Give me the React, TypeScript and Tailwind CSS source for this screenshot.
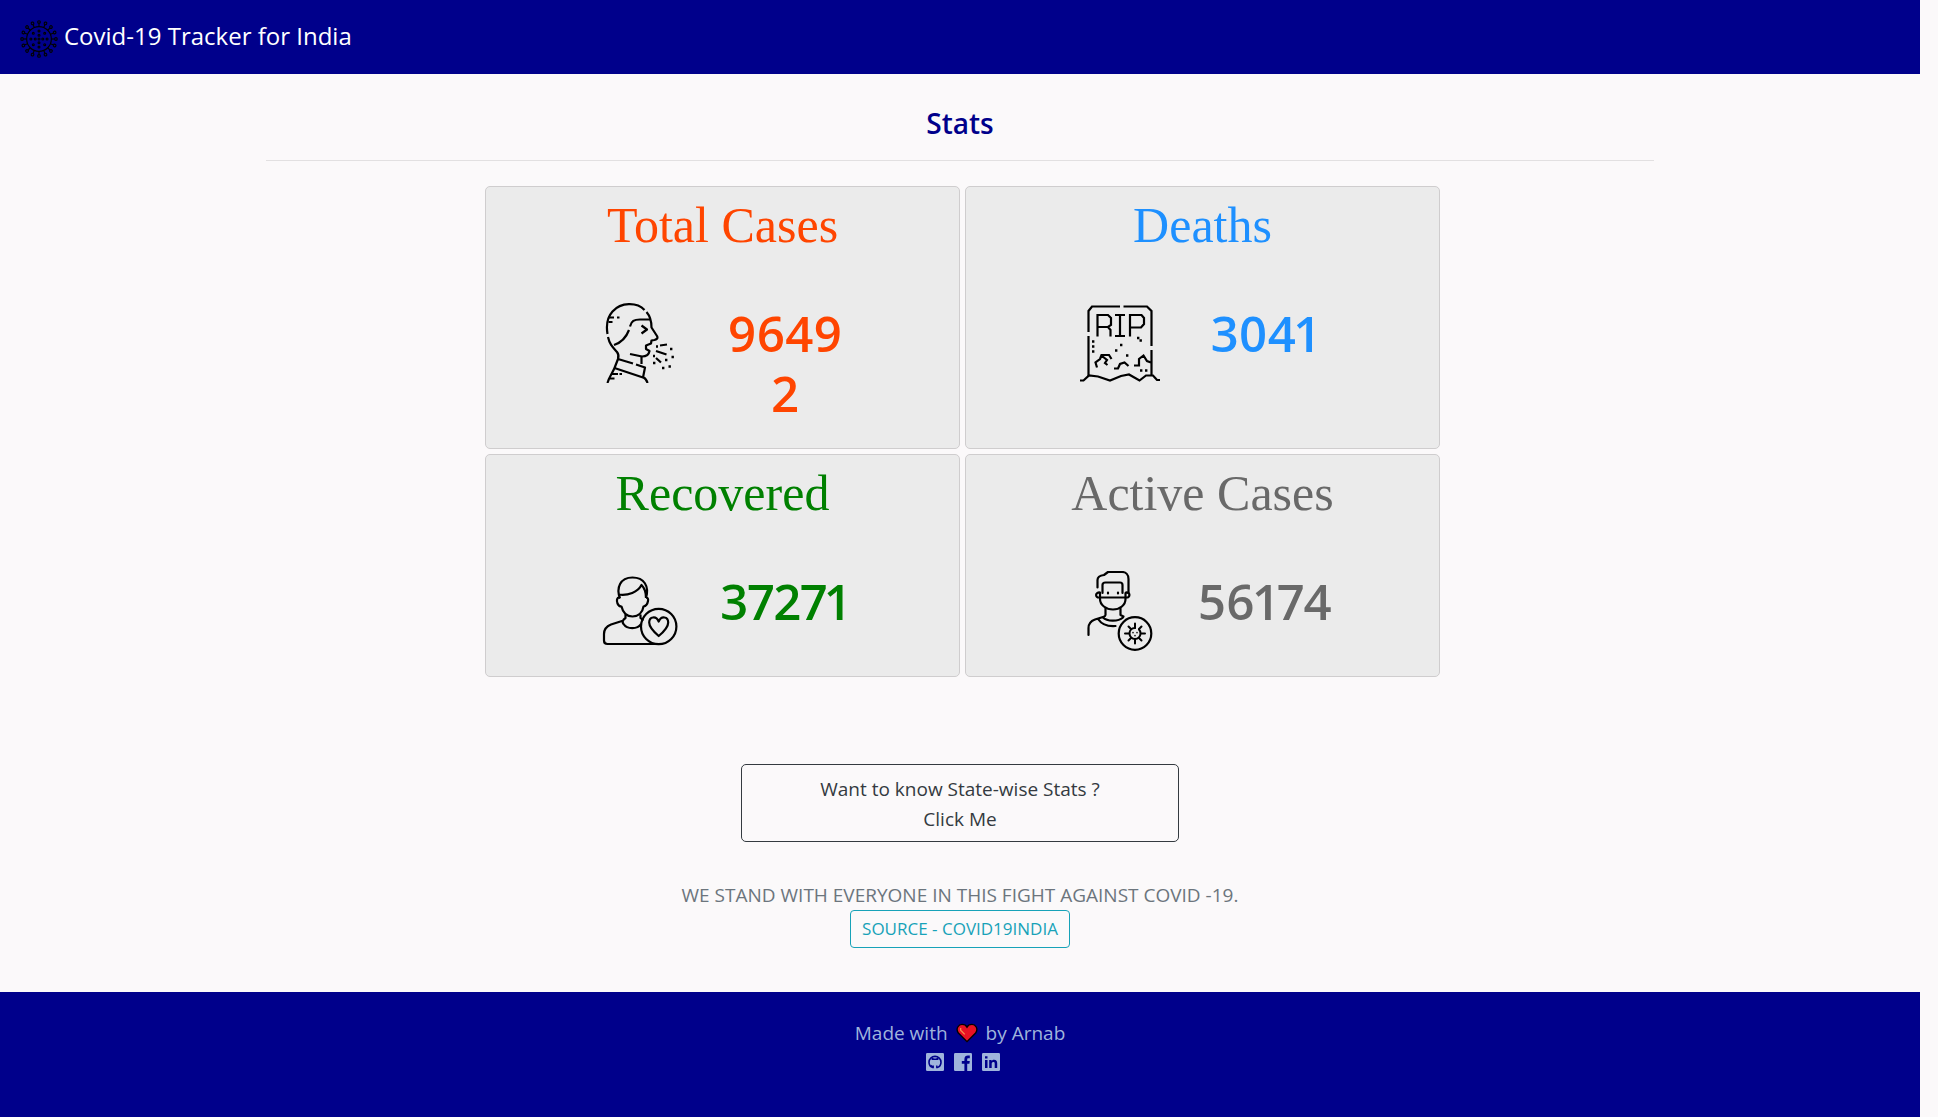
import React from "react";

function VirusLogo() {
  const spikes = Array.from({ length: 16 }, (_, i) => i * 22.5);
  const dots = [
    [20, 20], [20, 16], [20, 24], [24, 20], [16, 20], [20, 11.5], [20, 28.5], [11.5, 20], [28.5, 20],
    [14, 14], [26, 26], [14, 26], [26, 14],
  ];
  return (
    <svg viewBox="0 0 40 40" className="size-[38px]" fill="none" stroke="#000" strokeWidth="1.2" aria-hidden="true">
      <circle cx="20" cy="20" r="13" />
      {spikes.map((a) => (
        <g key={a} transform={`rotate(${a} 20 20)`}>
          <path d="M20 7V4" />
          <circle cx="20" cy="2.2" r="1.4" />
        </g>
      ))}
      {dots.map(([x, y]) => (
        <circle key={`${x}-${y}`} cx={x} cy={y} r="1" />
      ))}
    </svg>
  );
}

function CoughIcon() {
  return (
    <svg viewBox="0 0 80 80" className="size-20 shrink-0" fill="none" stroke="#000" strokeWidth="2.2" strokeLinejoin="round" aria-hidden="true">
      <path d="M7.5 31C6 22 7.500 14 12.500 8.500C21-1 37-1 44.500 7M46.500 9C50 13 51.500 18 51.500 24.500L57 33C58 35 57.500 36 54.500 37L51.500 37.500L51 40.500L46 42.500L46 46L49.500 48C49 51 47.500 53.500 42 53.500L30 51" />
      <path d="M51 16.500H40C34 16.500 31.500 18 30 23.500M29 27C26 35 20 40 14 42" />
      <path d="M8 34C9.500 41 12.500 44 17 49C19 51.500 19 53 18 56M41.500 53.500V61" />
      <path d="M33 60.500L18 56L14.500 65L43 74.500L45 64.500L36 61.500M14.500 65C12 71 9 74 7.500 80M43 74C45.500 75.500 47 77.500 47.500 80" />
      <path d="M41.500 22.500L47 26.500L41.500 30.500M8 14.500H14M8.500 19H12.500M17 14.500H19.500M12 71H18M10 75.500H14.500M19.500 71H22M60 42.500L67 41.500M56 48L66.500 51.500M56 55L61 59.500" />
      <path d="M56 43.500h2M70 46h2.400M71.500 54h2.400M65 57h2.400M53 60h2.400M68.500 63.500h2.400M62 65h2.400M53 53h2" strokeWidth="2.400" />
    </svg>
  );
}

function GraveIcon() {
  return (
    <svg viewBox="0 0 80 80" className="size-20 shrink-0" fill="none" stroke="#000" strokeWidth="2.2" aria-hidden="true">
      <path d="M8.500 29V8L12 3.500H40M43.500 3.500H67L71.500 8V43M8.500 33V73M71.500 47V73" />
      <path d="M0 77.500H3.500L9 72.500L18 73.500L30 77.500L41 73L49 71.500L59.500 77.500L66 72.500H73L77 77H80" />
      <path d="M17.500 33.500V12H28L31 15V22L28 24H17.500M28 24L30.500 27V33.500M35 12H45M40 12V33M35 33H45M50 33.500V12H61.500L64 15V21L61 24.500H50" />
      <path d="M17 64.500L15.500 59.500L20 56L21.500 52H29L31.500 56M22 53L27 57L25 60L27.500 62M34 65.500H38L40 61L44.500 59.500L48.500 63M54 62.500H59V56L63.500 52.500L67 58L71 59.500" />
      <path d="M12 38.500h2.400M12 43.500h2.400M12 48.500h2.400M57 35h2.400M59.500 37.500h2.400M40 42h2.400M35 47.500h2.400M46 52.500h2.400M60 67.500h2.400M65 67.500h2.400" strokeWidth="2.400" />
    </svg>
  );
}

function RecoveredIcon() {
  return (
    <svg viewBox="0 0 80 80" className="size-20 shrink-0" fill="none" stroke="#000" strokeWidth="2.2" strokeLinejoin="round" aria-hidden="true">
      <path d="M20 27.500C16 17 20 6.500 32.500 6.500C44 6.500 49.500 15 46 27M18.500 23.500C28 25 38 21 41.500 14C44 16.500 46 20 46 27" />
      <path d="M20 26.500C16.500 26 16.500 30 17.500 32.500C18.500 35 20 35.500 21.500 35.500C23 42 27 45.500 32.500 45.500C38 45.500 42.500 42 43.500 35.500C46 35 47.500 33 48 30C48.500 27.500 47.500 26.500 46 27" />
      <path d="M25.500 43.500V47C22.500 49 22 51 23.500 53C27 58.500 37.500 58.500 41 53M40.500 43.500V47L43.500 49.500M23.500 49.500L11 53.500C6 55.500 4 59 4 63V69.500C4 71.500 5.500 73 7.500 73H60" />
      <circle cx="58.700" cy="55.500" r="17.700" />
      <path d="M58.700 65C54 61 49.200 56.500 49.200 51.500C49.200 45.500 56.200 44.500 58.700 50.500C61.200 44.500 68.200 45.500 68.200 51.500C68.200 56.500 63.500 61 58.700 65Z" />
    </svg>
  );
}

function ActiveIcon() {
  return (
    <svg viewBox="0 0 80 80" className="size-20 shrink-0" fill="none" stroke="#000" strokeWidth="2.2" strokeLinecap="round" strokeLinejoin="round" aria-hidden="true">
      <path d="M17.500 16.500V9C17.500 5.500 20 4.500 24 4L28 1H42C46 1 48.500 4 48.500 8V22M22.500 22V14C22.500 12.500 24 11.500 25.500 11.500H40C41.500 11.500 42.500 12.500 42.500 14V22" />
      <path d="M20 26.500H46M20 21.500C15 21 15 26.500 19 26.500M46 21.500C50.500 21 50.500 26.500 46.500 26.500M20 22V28C20 34 26 38.500 33 38.500C40 38.500 45.500 34 45.500 28V22M28 21.500V22.500M38 21.500V22.500" />
      <path d="M25.500 37.500V44C25.500 45 24.500 45.500 23 46L15 48.500C11 50 8.500 52 8.500 57V64M40.500 37.500V44L43.500 45.500M23 46.500C27 50.500 38 51 43 46.500M18.500 48.500C22 54 28 55.500 35.500 55" />
      <circle cx="55" cy="62.500" r="16.300" />
      <path d="M55 57V52.500M55 68.500v4M49 62.500H45M61 62.500H65M51 58L48.500 55.500M59 58L61.500 55.500M51 67L48.500 69.500M59 67L61.500 69.500" strokeWidth="2" />
      <path d="M55 57C51.500 57 49.500 59.500 49.500 62.500C49.500 65.500 52 68 55 68C58 68 60.500 65.500 60.500 62.500C60.500 61 60 59.500 59 58.500" strokeWidth="2" />
      <path d="M53 61.500v.2M57 61.500v.2M55 64.500v.2" strokeWidth="1.500" />
    </svg>
  );
}

function HeartIcon() {
  return (
    <svg viewBox="0 0 24 22" className="h-5 w-[22px]" role="img" aria-label="love">
      <path d="M12 20.500L2.500 11C-1 6 3 1.500 6.500 1.500C9 1.500 11 2.500 12 4.500C13 2.500 15 1.500 17.500 1.500C21 1.500 25 6 21.500 11Z" fill="#e81224" stroke="#000" strokeWidth="1.500" />
      <path d="M5 5.500V8L9.500 12.500" fill="none" stroke="#f7894a" strokeWidth="1.500" />
    </svg>
  );
}

const socials = [
  {
    name: "GitHub",
    mark: (
      <g fill="none" stroke="#00008b">
        <path d="M7 14.600C4.500 13.800 3 11.700 3 9.200C3 5.900 5.700 3.400 9 3.400C12.300 3.400 15 5.900 15 9.200C15 11.700 13.500 13.800 11 14.600" strokeWidth="1.600" />
        <path d="M7.200 15.200V12.600M10.800 15.200V12.600M7.200 13.600C5.800 13.800 5.400 12.800 4.800 12.200" strokeWidth="1.400" />
        <path d="M5.600 7V4.200L8 5.400H10L12.400 4.200V7Z" fill="#00008b" stroke="none" />
      </g>
    ),
  },
  {
    name: "Facebook",
    mark: <path d="M10.400 18V10.800H7.800V8H10.400V6.200C10.400 3.700 11.900 2.600 14 2.600H15.800V5.200H14.400C13.500 5.200 13.200 5.600 13.200 6.400V8H15.800L15.400 10.800H13.200V18Z" fill="#00008b" />,
  },
  {
    name: "LinkedIn",
    mark: <path d="M3 7H5.500V15H3ZM3 3.200H5.500V5.600H3ZM7.200 7H9.600V8.100C10.200 7.200 11 6.800 12.100 6.800C14.300 6.800 15.200 8.200 15.200 10.300V15H12.700V10.700C12.700 9.600 12.400 9 11.400 9C10.200 9 9.700 9.800 9.700 11V15H7.200Z" fill="#00008b" />,
  },
];

const cards = [
  { title: "Total Cases", value: "96492", color: "text-[#ff4500]", wrap: "break-all", Icon: CoughIcon },
  { title: "Deaths", value: "3041", color: "text-[#1e90ff]", wrap: "whitespace-nowrap", Icon: GraveIcon },
  { title: "Recovered", value: "37271", color: "text-[#008000]", wrap: "whitespace-nowrap", Icon: RecoveredIcon },
  { title: "Active Cases", value: "56174", color: "text-[#696969]", wrap: "whitespace-nowrap", Icon: ActiveIcon },
];

export default function App() {
  return (
    <div className="flex min-h-screen flex-col bg-[#fbf9fa] pr-[18px] font-['Open_Sans',sans-serif] text-[19px] leading-[30px]">
      <header className="flex h-[74px] items-start gap-1.5 bg-[#00008b] pt-5 pl-5">
        <VirusLogo />
        <a href="#" className="text-2xl leading-8 text-white">Covid-19 Tracker for India</a>
      </header>

      <main className="flex grow flex-col items-center">
        <div className="w-full max-w-[1388px] border-b border-[#e2e0e1] pt-8 pb-5 text-center">
          <h1 className="text-[28px] leading-[34px] font-semibold text-[#00008b]">Stats</h1>
        </div>

        <section className="mt-[25px] ml-[5px] grid w-full max-w-[955px] grid-cols-2 gap-[5px]">
          {cards.map(({ title, value, color, wrap, Icon }) => (
            <article key={title} className={`rounded-[5px] border border-[#cfcdce] bg-[#ebebeb] pt-2 pb-[25px] text-center ${color}`}>
              <h2 className="font-['Liberation_Serif',serif] text-[50px] leading-[60px]">{title}</h2>
              <div className="mt-12 flex items-start justify-center gap-[45px]">
                <Icon />
                <div className="flex w-[120px] justify-center">
                  <p className={`text-[49px] leading-[60px] font-semibold proportional-nums ${wrap}`}>{value}</p>
                </div>
              </div>
            </article>
          ))}
        </section>

        <button className="mt-[87px] w-full max-w-[438px] rounded-[5px] border border-[#343a40] px-4 pt-[9px] pb-[7px] text-[#343a40]">
          Want to know State-wise Stats ?<br />Click Me
        </button>

        <p className="mt-[38px] text-[#6c757d]">WE STAND WITH EVERYONE IN THIS FIGHT AGAINST COVID -19.</p>
        <a href="#" className="mb-[43px] rounded border border-[#17a2b8] px-[11px] py-[5px] text-[17px] leading-[26px] text-[#17a2b8]">
          SOURCE - COVID19INDIA
        </a>
      </main>

      <footer className="flex h-[125px] flex-col items-center bg-[#00008b] pt-[26px] text-[#9fb4dc]">
        <p className="flex items-center gap-2">
          <span>Made with</span>
          <HeartIcon />
          <span>by Arnab</span>
        </p>
        <nav className="mt-[5px] ml-1.5 flex gap-[10px]">
          {socials.map(({ name, mark }) => (
            <a key={name} href="#" aria-label={name}>
              <svg viewBox="0 0 18 18" className="size-[18px]" aria-hidden="true">
                <rect width="18" height="18" rx="1.200" fill="#9fb4dc" />
                {mark}
              </svg>
            </a>
          ))}
        </nav>
      </footer>
    </div>
  );
}
